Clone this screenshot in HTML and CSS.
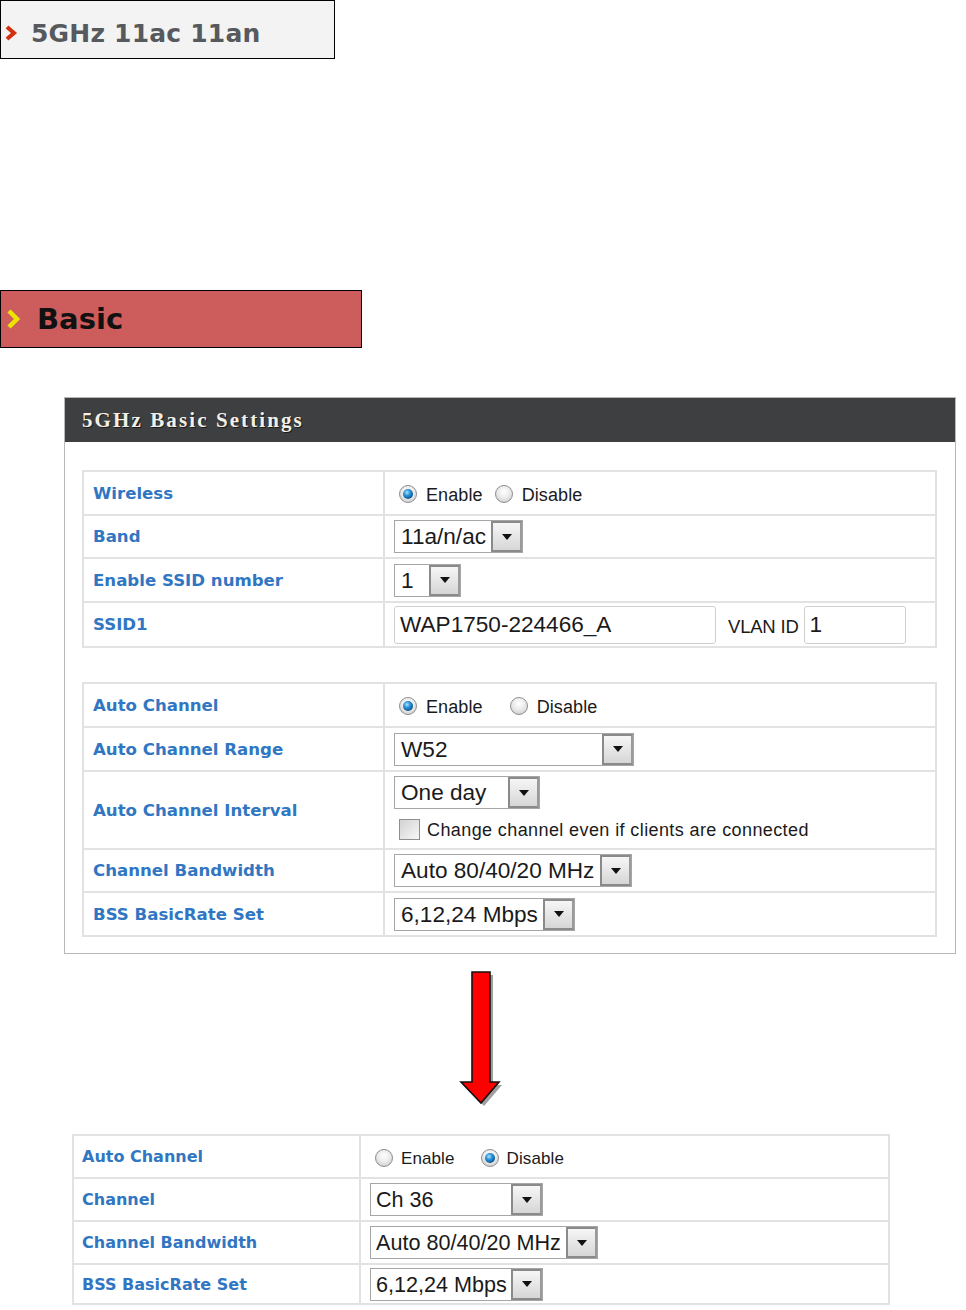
FILE: index.html
```html
<!DOCTYPE html>
<html>
<head>
<meta charset="utf-8">
<link rel="stylesheet" href="styles.css">
</head>
<body>
<div class="crumb">
  <svg class="chev" width="14" height="16" viewBox="0 0 14 16"><polyline points="2,2 9,8 2,14" fill="none" stroke="#d2300e" stroke-width="4" stroke-linejoin="miter"/></svg>
  <span class="crumb-text">5GHz 11ac 11an</span>
</div>

<div class="basic">
  <svg class="chev2" width="16" height="22" viewBox="0 0 16 22"><polyline points="3,3 11,11 3,19" fill="none" stroke="#ece400" stroke-width="4.5"/></svg>
  <span class="basic-text">Basic</span>
</div>

<div class="panel">
  <div class="panel-head">5GHz Basic Settings</div>
  <div class="panel-body">
    <div class="grid g1">
      <div class="lab">Wireless</div>
      <div class="val radios">
        <span class="rb"><span class="radio on"></span><span class="rt">Enable</span></span>
        <span class="rb rb-near"><span class="radio"></span><span class="rt">Disable</span></span>
      </div>
      <div class="lab">Band</div>
      <div class="val"><div class="sel w-band"><span class="sv">11a/n/ac</span><span class="sb"></span></div></div>
      <div class="lab">Enable SSID number</div>
      <div class="val"><div class="sel w-num"><span class="sv">1</span><span class="sb"></span></div></div>
      <div class="lab">SSID1</div>
      <div class="val">
        <div class="inp w-ssid">WAP1750-224466_A</div>
        <span class="vlan">VLAN ID</span>
        <div class="inp w-vlan">1</div>
      </div>
    </div>

    <div class="grid g2">
      <div class="lab">Auto Channel</div>
      <div class="val radios">
        <span class="rb"><span class="radio on"></span><span class="rt">Enable</span></span>
        <span class="rb rb-far"><span class="radio"></span><span class="rt">Disable</span></span>
      </div>
      <div class="lab">Auto Channel Range</div>
      <div class="val"><div class="sel w-w52"><span class="sv">W52</span><span class="sb"></span></div></div>
      <div class="lab">Auto Channel Interval</div>
      <div class="val col">
        <div class="sel w-day"><span class="sv">One day</span><span class="sb"></span></div>
        <div class="chkrow"><span class="chk"></span><span class="rt">Change channel even if clients are connected</span></div>
      </div>
      <div class="lab">Channel Bandwidth</div>
      <div class="val"><div class="sel w-bw"><span class="sv">Auto 80/40/20 MHz</span><span class="sb"></span></div></div>
      <div class="lab">BSS BasicRate Set</div>
      <div class="val"><div class="sel w-bss"><span class="sv">6,12,24 Mbps</span><span class="sb"></span></div></div>
    </div>
  </div>
</div>

<svg class="arrow" width="52" height="140" viewBox="0 0 52 140">
  <polygon points="19,7 37,7 37,117 46,117 28,138 8,117 19,117" fill="#a0a0a0"/>
  <polygon points="16,4 34,4 34,114 43,114 25,135 5,114 16,114" fill="#ff0000" stroke="#111" stroke-width="1.6" stroke-linejoin="miter"/>
</svg>

<div class="grid g3">
  <div class="lab">Auto Channel</div>
  <div class="val radios">
    <span class="rb"><span class="radio"></span><span class="rt">Enable</span></span>
    <span class="rb rb-far3"><span class="radio on"></span><span class="rt">Disable</span></span>
  </div>
  <div class="lab">Channel</div>
  <div class="val"><div class="sel w-ch"><span class="sv">Ch 36</span><span class="sb"></span></div></div>
  <div class="lab">Channel Bandwidth</div>
  <div class="val"><div class="sel w-bw3"><span class="sv">Auto 80/40/20 MHz</span><span class="sb"></span></div></div>
  <div class="lab">BSS BasicRate Set</div>
  <div class="val"><div class="sel w-bss3"><span class="sv">6,12,24 Mbps</span><span class="sb"></span></div></div>
</div>
</body>
</html>
```

FILE: styles.css
```css
body {
  margin: 0;
  background: #fff;
  font-family: "Liberation Sans", Arial, sans-serif;
  color: #1a1a1a;
}

/* breadcrumb boxes */
.crumb {
  width: 333px;
  height: 57px;
  border: 1px solid #000;
  background: #f3f3f3;
  display: flex;
  align-items: center;
}
.chev { margin-left: 4px; margin-top: 7px; }
.crumb-text {
  margin-left: 12px;
  margin-top: 7px;
  font-family: "DejaVu Sans", Verdana, sans-serif;
  font-weight: bold;
  font-size: 25px;
  letter-spacing: 0.2px;
  color: #56595d;
}

.basic {
  margin-top: 231px;
  width: 360px;
  height: 56px;
  border: 1px solid #000;
  background: #cd5c5c;
  display: flex;
  align-items: center;
}
.chev2 { margin-left: 5px; }
.basic-text {
  margin-left: 15px;
  font-family: "DejaVu Sans", Verdana, sans-serif;
  font-weight: bold;
  font-size: 29px;
  color: #111;
}

/* panel */
.panel {
  margin: 49px 0 0 64px;
  width: 892px;
  box-sizing: border-box;
  border: 1px solid #b8b8b8;
}
.panel-head {
  height: 44px;
  background: #3d3f40;
  color: #f2efe6;
  font-family: "Liberation Serif", "Times New Roman", serif;
  font-weight: bold;
  font-size: 21px;
  letter-spacing: 2.1px;
  padding-left: 17px;
  display: flex;
  align-items: center;
  text-shadow: 1px 1px 0 #1c1c1c;
}
.panel-body {
  padding: 28px 0 16px 17px;
}

/* grid tables */
.grid {
  display: grid;
  gap: 2px;
  padding: 2px;
  background: #e2e2e2;
  box-sizing: border-box;
}
.g1 {
  width: 855px;
  grid-template-columns: 299px 550px;
  grid-template-rows: 42px 41px 42px 43px;
}
.g2 {
  width: 855px;
  margin-top: 34px;
  grid-template-columns: 299px 550px;
  grid-template-rows: 42px 42px 76px 41px 42px;
}
.g3 {
  width: 818px;
  margin: 26px 0 0 72px;
  grid-template-columns: 285px 527px;
  grid-template-rows: 41px 41px 41px 38px;
}

.lab, .val {
  background: #fff;
  display: flex;
  align-items: center;
}
.lab {
  padding-left: 9px;
  font-family: "DejaVu Sans", Verdana, sans-serif;
  font-weight: bold;
  font-size: 16.6px;
  color: #3176c2;
}
.g3 .lab {
  padding-left: 8px;
  font-size: 16px;
}
.val {
  padding-left: 9px;
}
.val.col {
  flex-direction: column;
  align-items: flex-start;
  justify-content: flex-start;
  padding-top: 4px;
}

/* radios */
.radios { padding-left: 14px; padding-top: 2px; }
.rb {
  display: flex;
  align-items: center;
}
.rb-near { margin-left: 12px; }
.rb-far { margin-left: 27px; }
.rb-far3 { margin-left: 26px; }
.rt {
  margin-left: 9px;
  font-size: 18px;
  letter-spacing: 0.1px;
  color: #1a1a1a;
  padding-top: 3px;
}
.g3 .rt { font-size: 17px; margin-left: 8px; }
.radio {
  position: relative;
  width: 18px;
  height: 18px;
  border-radius: 50%;
  box-sizing: border-box;
  border: 1px solid #8e8e8e;
  background: radial-gradient(circle at 50% 35%, #ffffff 0%, #ececec 45%, #c4c4c4 100%);
}
.radio.on::after {
  content: "";
  position: absolute;
  left: 3px;
  top: 3px;
  width: 10px;
  height: 10px;
  border-radius: 50%;
  background: radial-gradient(circle at 40% 35%, #a9e4ff 0%, #2f93d8 35%, #0c5a98 70%, #073a66 100%);
}

/* selects */
.sel {
  display: flex;
  height: 33px;
  box-sizing: border-box;
  border: 1px solid #a6a6a6;
  background: #fff;
}
.sv {
  flex: 1;
  padding-left: 6px;
  font-size: 22.6px;
  line-height: 31px;
  color: #1a1a1a;
  white-space: nowrap;
}
.g3 .sv { font-size: 21.6px; padding-left: 5px; }
.sb {
  width: 31px;
  box-sizing: border-box;
  border: 2px solid #8a8a8a;
  border-right-color: #9a9a9a;
  background: linear-gradient(#f6f6f6, #d6d6d6);
  display: flex;
  align-items: center;
  justify-content: center;
}
.sb::after {
  content: "";
  width: 0;
  height: 0;
  border-left: 5px solid transparent;
  border-right: 5px solid transparent;
  border-top: 6px solid #111;
}
.w-band { width: 129px; }
.w-num { width: 67px; }
.w-w52 { width: 240px; }
.w-day { width: 146px; }
.w-bw { width: 238px; }
.w-bss { width: 181px; }
.w-ch { width: 173px; }
.w-bw3 { width: 228px; }
.w-bss3 { width: 173px; }

/* inputs */
.inp {
  height: 38px;
  box-sizing: border-box;
  border: 1px solid #cfcfcf;
  border-radius: 3px;
  padding-left: 5px;
  font-size: 22.6px;
  line-height: 36px;
  color: #1a1a1a;
}
.w-ssid { width: 322px; }
.w-vlan { width: 102px; }
.vlan {
  margin: 0 5px 0 12px;
  font-size: 18.5px;
  letter-spacing: -0.2px;
  color: #1a1a1a;
  padding-top: 4px;
}

/* checkbox */
.chkrow {
  display: flex;
  align-items: center;
  margin-top: 8px;
  padding-left: 5px;
}
.chk {
  width: 21px;
  height: 21px;
  box-sizing: border-box;
  border: 1px solid #8e8e8e;
  background: linear-gradient(135deg, #d2d2d2, #f7f7f7);
}
.chkrow .rt { margin-left: 7px; letter-spacing: 0.4px; }

/* arrow */
.arrow {
  display: block;
  margin: 14px 0 0 456px;
}
```
